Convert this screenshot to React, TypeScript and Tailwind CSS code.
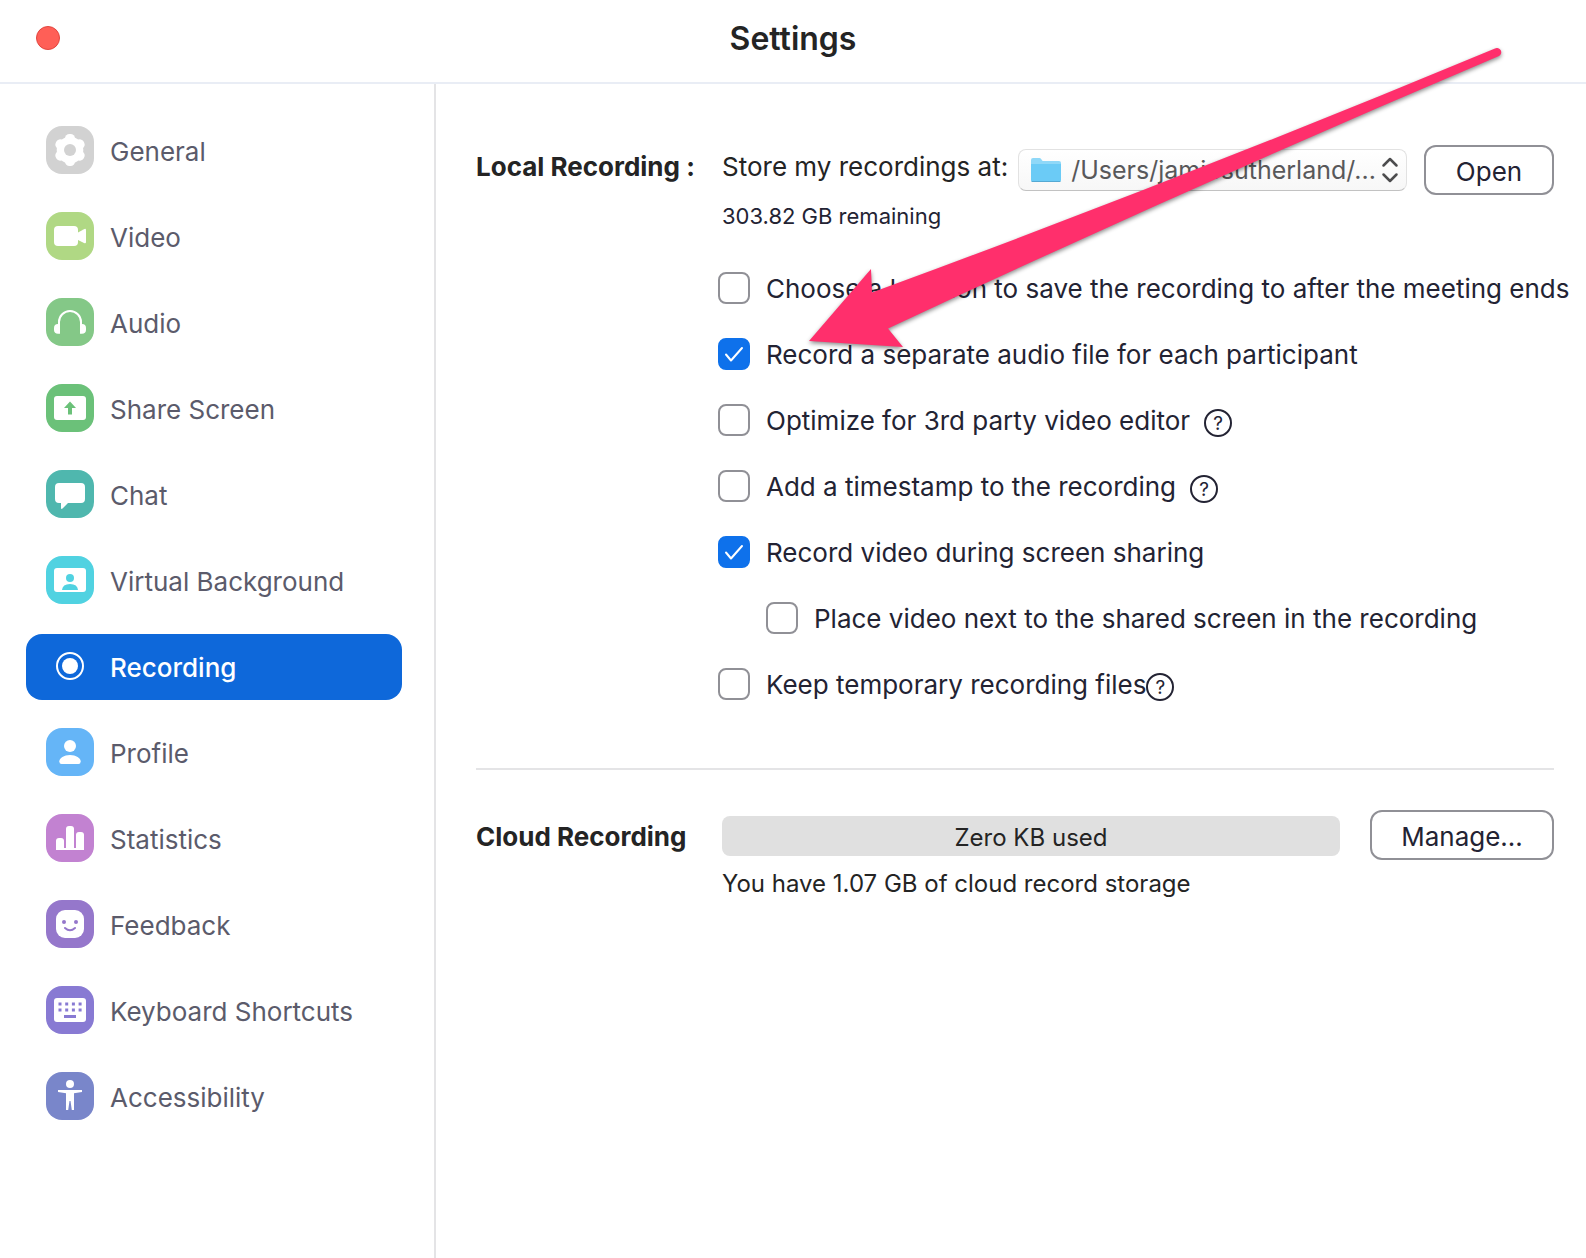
import { useState } from "react"
import type { ReactNode } from "react"
import clsx from "clsx"

type NavItem = {
    id: string
    label: string
    color: string
    icon: ReactNode
}

// glyphs are drawn on the 48x48 tile behind them
const navItems: NavItem[] = [
    {
        id: "general",
        label: "General",
        color: "bg-[#d2d2d2]",
        icon: (
            <>
                <g fill="white">
                    <circle cx="24" cy="24" r="13.300" />
                    <rect x="19" y="8" width="10" height="32" rx="4.500" />
                    <rect x="19" y="8" width="10" height="32" rx="4.500" transform="rotate(60 24 24)" />
                    <rect x="19" y="8" width="10" height="32" rx="4.500" transform="rotate(120 24 24)" />
                </g>
                <circle cx="24" cy="24" r="6" fill="#d2d2d2" />
            </>
        ),
    },
    {
        id: "video",
        label: "Video",
        color: "bg-[#b0d884]",
        icon: (
            <g fill="white">
                <rect x="8" y="14" width="24" height="20" rx="4" />
                <path d="M32 20.5 38 17.2Q40 16.2 40 18.2V30Q40 32 38 31L32 28Z" />
            </g>
        ),
    },
    {
        id: "audio",
        label: "Audio",
        color: "bg-[#84c887]",
        icon: (
            <>
                <path d="M13 28V24A11 11 0 0 1 35 24V28" fill="none" stroke="white" strokeWidth="2" />
                <path d="M14 26V35.800H12A4 4 0 0 1 8 32V30A4 4 0 0 1 12 26ZM34 26V35.800H36A4 4 0 0 0 40 32V30A4 4 0 0 0 36 26Z" fill="white" />
            </>
        ),
    },
    {
        id: "share-screen",
        label: "Share Screen",
        color: "bg-[#6bc179]",
        icon: (
            <>
                <rect x="8" y="12" width="32" height="24" rx="3" fill="white" />
                <path d="M24 17.500 30 24H26V30.500H22V24H18Z" fill="#6bc179" />
            </>
        ),
    },
    {
        id: "chat",
        label: "Chat",
        color: "bg-[#4fb7ae]",
        icon: <path d="M13 13H35A4 4 0 0 1 39 17V29A4 4 0 0 1 35 33H22L16.500 38.600Q15 39.600 15 38V33H13A4 4 0 0 1 9 29V17A4 4 0 0 1 13 13Z" fill="white" />,
    },
    {
        id: "virtual-background",
        label: "Virtual Background",
        color: "bg-[#50d2e1]",
        icon: (
            <>
                <rect x="8" y="12" width="32" height="24" rx="3" fill="white" />
                <circle cx="24" cy="22" r="4" fill="#50d2e1" />
                <path d="M16 34Q16.500 28 24 28T32 34Z" fill="#50d2e1" />
            </>
        ),
    },
    {
        id: "recording",
        label: "Recording",
        color: "bg-transparent",
        icon: (
            <>
                <circle cx="24" cy="24" r="13" fill="none" stroke="white" strokeWidth="2" />
                <circle cx="24" cy="24" r="8" fill="white" />
            </>
        ),
    },
    {
        id: "profile",
        label: "Profile",
        color: "bg-[#65b5f7]",
        icon: (
            <g fill="white">
                <circle cx="24" cy="18" r="6" />
                <path d="M15.500 36Q13.300 36 13.300 33.600C13.300 30 18 27 24 27S34.700 30 34.700 33.600Q34.700 36 32.500 36Z" />
            </g>
        ),
    },
    {
        id: "statistics",
        label: "Statistics",
        color: "bg-[#c282d1]",
        icon: (
            <g fill="white">
                <path d="M10 36V27A3 3 0 0 1 13 24H15A3 3 0 0 1 18 27V36Z" />
                <path d="M20 36V15A3 3 0 0 1 23 12H25A3 3 0 0 1 28 15V36Z" />
                <path d="M30 36V21A3 3 0 0 1 33 18H35A3 3 0 0 1 38 21V36Z" />
                <rect x="10" y="34" width="28" height="2" />
            </g>
        ),
    },
    {
        id: "feedback",
        label: "Feedback",
        color: "bg-[#9577cb]",
        icon: (
            <>
                <rect x="10" y="10" width="28" height="28" rx="9" fill="white" />
                <circle cx="18" cy="22" r="2" fill="#9577cb" />
                <circle cx="30" cy="22" r="2" fill="#9577cb" />
                <path d="M19 28Q24 32.500 29 28" fill="none" stroke="#9577cb" strokeWidth="2" strokeLinecap="round" />
            </>
        ),
    },
    {
        id: "keyboard",
        label: "Keyboard Shortcuts",
        color: "bg-[#887ad3]",
        icon: (
            <>
                <rect x="8" y="12" width="32" height="24" rx="3" fill="white" />
                <path d="M12.500 18H36M12.500 24H36" stroke="#887ad3" strokeWidth="3" strokeDasharray="3 3.700" />
                <path d="M18 30.500H30" stroke="#887ad3" strokeWidth="3" />
            </>
        ),
    },
    {
        id: "accessibility",
        label: "Accessibility",
        color: "bg-[#7986ca]",
        icon: (
            <g fill="white">
                <circle cx="24" cy="12" r="4" />
                <path d="M12 18H36V20L28 21.300V38H25.800L24.500 29H23.500L22.200 38H20V21.300L12 20Z" />
            </g>
        ),
    },
]

const recordingOptions = [
    { id: "location", label: "Choose a location to save the recording to after the meeting ends", checked: false },
    { id: "separate-audio", label: "Record a separate audio file for each participant", checked: true },
    { id: "optimize", label: "Optimize for 3rd party video editor", checked: false, help: "ml-3.5" },
    { id: "timestamp", label: "Add a timestamp to the recording", checked: false, help: "ml-3.5" },
    { id: "during-share", label: "Record video during screen sharing", checked: true },
    { id: "next-to-share", label: "Place video next to the shared screen in the recording", checked: false, nested: true },
    { id: "keep-temp", label: "Keep temporary recording files", checked: false, help: "ml-0" },
]

const Sidebar = ({ active, onSelect }: { active: string; onSelect: (id: string) => void }) => (
    <nav className="flex w-[436px] shrink-0 flex-col gap-5 border-r-2 border-[#e4e4e6] pt-[34px] pr-8 pl-[26px]">
        {navItems.map((item) => (
            <button
                key={item.id}
                type="button"
                onClick={() => onSelect(item.id)}
                className={clsx(
                    "flex h-[66px] items-center gap-4 rounded-2xl pl-5 text-left",
                    item.id === active ? "bg-[#0e68da] font-medium text-white" : "text-[#5b5b6b]"
                )}
            >
                <span className={clsx("mb-0.5 size-12 shrink-0 rounded-2xl", item.color)}>
                    <svg viewBox="0 0 48 48" className="size-12" aria-hidden="true">
                        {item.icon}
                    </svg>
                </span>
                <span className="whitespace-nowrap">{item.label}</span>
            </button>
        ))}
    </nav>
)

const OptionRow = ({ option }: { option: (typeof recordingOptions)[number] }) => {
    const [checked, setChecked] = useState(option.checked)

    return (
        <li className={clsx("flex h-8 items-center", option.nested && "pl-12")}>
            <span className="relative size-8 shrink-0">
                <input
                    id={option.id}
                    type="checkbox"
                    checked={checked}
                    onChange={(e) => setChecked(e.target.checked)}
                    className="block size-8 appearance-none rounded-lg border-2 border-[#909096] bg-white checked:border-[#0e71eb] checked:bg-[#0e71eb]"
                />
                {checked && (
                    <svg viewBox="0 0 32 32" className="pointer-events-none absolute inset-0" aria-hidden="true">
                        <path d="M8 16.500 13 22.500 24 10" fill="none" stroke="white" strokeWidth="2" strokeLinecap="round" strokeLinejoin="round" />
                    </svg>
                )}
            </span>
            <label htmlFor={option.id} className="pl-4 whitespace-nowrap">
                {option.label}
            </label>
            {option.help && (
                <button
                    type="button"
                    aria-label={"Help: " + option.label}
                    className={clsx("mt-1.5 flex size-7 shrink-0 items-center justify-center rounded-full border-2 border-[#232333] text-[19px] leading-none", option.help)}
                >
                    ?
                </button>
            )}
        </li>
    )
}

const LocationSelect = () => (
    <div className="relative mt-1 min-w-0 flex-1">
        <select
            id="store-location"
            className="block h-[42px] w-full appearance-none rounded-lg border border-[#e2e2e2] border-b-[#c2c2c2] bg-linear-to-b from-white to-[#f7f7f7] pt-0.5 pr-6 pl-[52px] text-[25px] text-[#58585a]"
        >
            <option>/Users/jamiesutherland/...</option>
        </select>
        <svg viewBox="0 0 32 26" className="pointer-events-none absolute top-2 left-3 h-[26px] w-8" aria-hidden="true">
            <path d="M1 3Q1 1 3 1H9.500Q11 1 11.500 2.500T13.500 4H29Q31 4 31 6V24H1Z" fill="#8fd8f8" />
            <path d="M1 7H31V22.500Q31 24.500 29 24.500H3Q1 24.500 1 22.500Z" fill="#6bcbf6" />
            <path d="M1.500 24.500H30.500" stroke="#55a9d3" strokeWidth="1" />
        </svg>
        <svg viewBox="0 0 18 26" className="pointer-events-none absolute top-2 right-2 h-[26px] w-[18px]" aria-hidden="true">
            <path d="M2.500 8.500 9 2 15.500 8.500M2.500 17.500 9 24 15.500 17.500" fill="none" stroke="#4c4c4e" strokeWidth="2.500" strokeLinecap="round" strokeLinejoin="round" />
        </svg>
    </div>
)

const PointerArrow = () => (
    <svg viewBox="800 40 710 320" className="pointer-events-none absolute top-10 left-[800px] h-[320px] w-[710px] drop-shadow-[0_2px_2px_rgba(0,0,0,0.45)]" aria-hidden="true">
        <path d="M809 341 871 269 872 292.500Q1184 178 1495 48.500A4.200 4.200 0 0 1 1499 56Q1190 187 888 328.500L903 347Z" fill="#ff2f6c" />
    </svg>
)

const App = () => {
    const [active, setActive] = useState("recording")

    return (
        <div className="relative flex min-h-screen flex-col overflow-x-hidden bg-white font-[Inter,'Liberation_Sans',sans-serif] text-[26px] text-[#232333]">
            <header className="relative flex h-[84px] items-center justify-center border-b-2 border-[#e9edf5] pb-1">
                <button type="button" aria-label="Close" className="absolute top-[26px] left-9 size-6 rounded-full border border-[#e2463f] bg-[#ff5f57]" />
                <h1 className="text-[32px] font-semibold text-[#242424]">Settings</h1>
            </header>

            <div className="flex flex-1">
                <Sidebar active={active} onSelect={setActive} />

                <main className="min-w-0 flex-1 pt-[61px] pr-8 pl-10">
                    <section className="flex">
                        <h2 className="w-[242px] shrink-0 leading-[44px] font-bold whitespace-nowrap text-[#242424]">Local Recording :</h2>
                        <div className="min-w-0 flex-1">
                            <div className="flex items-start pl-1">
                                <label htmlFor="store-location" className="pr-2.5 leading-[44px] whitespace-nowrap text-[#242424]">
                                    Store my recordings at:
                                </label>
                                <LocationSelect />
                                <button type="button" className="ml-[17px] h-[50px] w-[130px] shrink-0 rounded-xl border-2 border-[#909096] pt-0.5">
                                    Open
                                </button>
                            </div>
                            <p className="mt-[7px] pl-1 text-[22px] leading-7">303.82 GB remaining</p>
                            <ul className="mt-[42px] flex flex-col gap-[34px]">
                                {recordingOptions.map((option) => (
                                    <OptionRow key={option.id} option={option} />
                                ))}
                            </ul>
                        </div>
                    </section>

                    <section className="mt-[68px] flex border-t-2 border-[#e4e4e6] pt-10">
                        <h2 className="w-[246px] shrink-0 leading-[54px] font-bold whitespace-nowrap text-[#242424]">Cloud Recording</h2>
                        <div className="flex min-w-0 flex-1 items-start gap-[30px] text-[#242424]">
                            <div className="mt-1.5 min-w-0 flex-1 text-[24px]">
                                <div className="h-10 rounded-lg bg-[#e0e0e0] text-center leading-[44px]">Zero KB used</div>
                                <p className="mt-3 leading-8 whitespace-nowrap">You have 1.07 GB of cloud record storage</p>
                            </div>
                            <button type="button" className="h-[50px] w-[184px] shrink-0 rounded-xl border-2 border-[#909096] pt-0.5 text-[#232333]">
                                Manage...
                            </button>
                        </div>
                    </section>
                </main>
            </div>

            <PointerArrow />
        </div>
    )
}

export default App
